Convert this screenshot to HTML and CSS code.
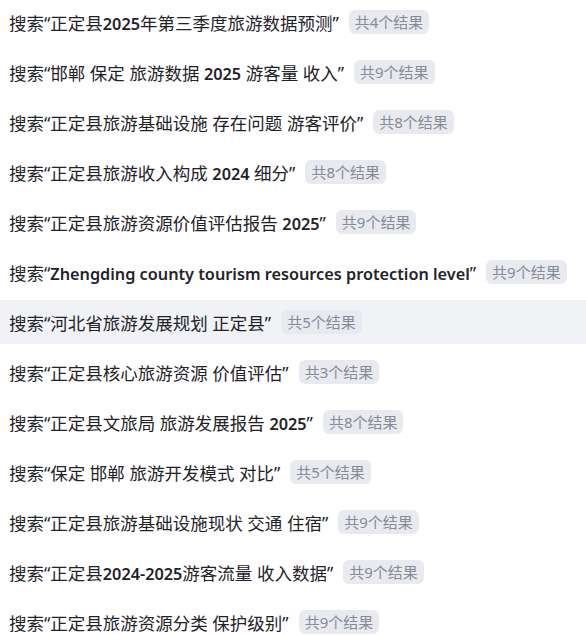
FILE: index.html
```html
<!DOCTYPE html>
<html lang="zh-CN">
<head>
  <meta charset="UTF-8" />
  <meta name="viewport" content="width=device-width, initial-scale=1.0" />
  <title>搜索记录</title>
  <link rel="stylesheet" href="styles.css">
</head>
<body>

  <!-- Search history -->
  <ul class="searches">
    <li class="search-item"><span class="query">搜索“正定县<b>2025</b>年第三季度旅游数据预测”</span><span class="count">共4个结果</span></li>
    <li class="search-item"><span class="query">搜索“邯郸 保定 旅游数据 <b>2025</b> 游客量 收入”</span><span class="count">共9个结果</span></li>
    <li class="search-item"><span class="query">搜索“正定县旅游基础设施 存在问题 游客评价”</span><span class="count">共8个结果</span></li>
    <li class="search-item"><span class="query">搜索“正定县旅游收入构成 <b>2024</b> 细分”</span><span class="count">共8个结果</span></li>
    <li class="search-item"><span class="query">搜索“正定县旅游资源价值评估报告 <b>2025</b>”</span><span class="count">共9个结果</span></li>
    <li class="search-item"><span class="query">搜索“<b>Zhengding county tourism resources protection level</b>”</span><span class="count">共9个结果</span></li>
    <li class="search-item hover"><span class="query">搜索“河北省旅游发展规划 正定县”</span><span class="count">共5个结果</span></li>
    <li class="search-item"><span class="query">搜索“正定县核心旅游资源 价值评估”</span><span class="count">共3个结果</span></li>
    <li class="search-item"><span class="query">搜索“正定县文旅局 旅游发展报告 <b>2025</b>”</span><span class="count">共8个结果</span></li>
    <li class="search-item"><span class="query">搜索“保定 邯郸 旅游开发模式 对比”</span><span class="count">共5个结果</span></li>
    <li class="search-item"><span class="query">搜索“正定县旅游基础设施现状 交通 住宿”</span><span class="count">共9个结果</span></li>
    <li class="search-item"><span class="query">搜索“正定县<b>2024-2025</b>游客流量 收入数据”</span><span class="count">共9个结果</span></li>
    <li class="search-item"><span class="query">搜索“正定县旅游资源分类 保护级别”</span><span class="count">共9个结果</span></li>
  </ul>

</body>
</html>
```

FILE: styles.css
```css
body {
  font-family: 'Noto Sans', 'Noto Sans CJK SC', sans-serif;
  background: #fff;
  color: #1f2329;
  margin: 0;
}

.searches {
  list-style: none;
  margin: 0;
  padding: 0;
  display: flex;
  flex-direction: column;
  gap: 6px;
}

.search-item {
  display: flex;
  align-items: center;
  gap: 10px;
  height: 44px;
  padding: 0 9px;
  font-size: 17.5px;
  white-space: nowrap;
}

.search-item.hover {
  background: #f1f2f6;
}

.query b {
  font-size: 16.25px;
  font-weight: 600;
}

.count {
  font-size: 15px;
  color: #868b96;
  background: #e8eaf0;
  border-radius: 6px;
  padding: 0 6px;
  height: 24px;
  line-height: 24px;
}
```
